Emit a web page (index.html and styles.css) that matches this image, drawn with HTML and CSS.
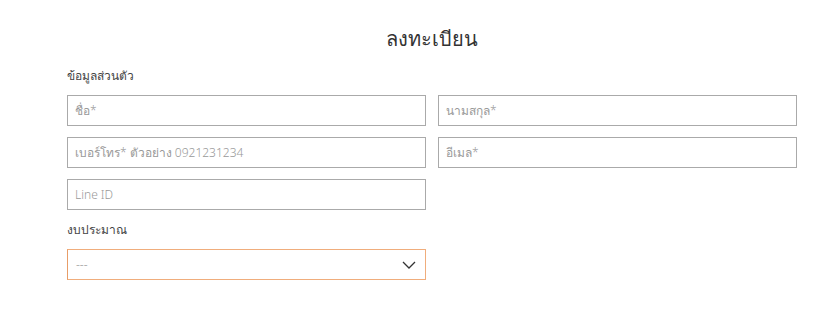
FILE: index.html
```html
<!DOCTYPE html>
<html lang="th">
  <head>
    <meta charset="UTF-8" />
    <meta name="viewport" content="width=device-width, initial-scale=1.0" />
    <title>ลงทะเบียน</title>
    <link rel="stylesheet" href="styles.css">
  </head>
  <body>
    <div class="register">
      <h2 class="title">ลงทะเบียน</h2>
      <p class="label">ข้อมูลส่วนตัว</p>
      <div class="fields">
        <input type="text" placeholder="ชื่อ*" />
        <input type="text" placeholder="นามสกุล*" />
        <input type="text" placeholder="เบอร์โทร* ตัวอย่าง 0921231234" />
        <input type="text" placeholder="อีเมล*" />
        <input type="text" placeholder="Line ID" />
      </div>
      <p class="label budget">งบประมาณ</p>
      <div class="fields">
        <div class="budget-select">
          <span>---</span>
          <svg width="14" height="8" viewBox="0 0 14 8">
            <path d="M1 1 L7 7 L13 1" fill="none" stroke="#333" stroke-width="1.3" />
          </svg>
        </div>
      </div>
    </div>
  </body>
</html>
```

FILE: styles.css
```css
body {
  font-family: "Noto Sans", "Liberation Sans", sans-serif;
  font-weight: 300;
  margin: 0;
  background: #fff;
  color: #333;
}
.register {
  width: 730px;
  margin-left: 67px;
  padding-top: 26px;
}
.title {
  font-size: 20px;
  font-weight: 300;
  line-height: 26px;
  text-align: center;
  margin: 0 0 15px;
  color: #333;
}
.label {
  font-size: 12px;
  line-height: 17px;
  margin: 0 0 11px;
  color: #444;
}
.budget {
  margin-top: 11px;
  margin-bottom: 11px;
}
.fields {
  display: grid;
  grid-template-columns: 1fr 1fr;
  column-gap: 12px;
  row-gap: 11px;
}
input {
  height: 31px;
  box-sizing: border-box;
  border: 1px solid #aaa;
  padding: 0 7px;
  font-family: inherit;
  font-weight: 300;
  font-size: 12px;
  color: #333;
  outline: none;
}
input::placeholder {
  color: #999;
}
.budget-select {
  height: 31px;
  box-sizing: border-box;
  border: 1px solid #f0ad7c;
  border-left-color: #e89d68;
  display: flex;
  align-items: center;
  justify-content: space-between;
  padding: 0 9px 0 8px;
  font-size: 12px;
  color: #999;
}
```
